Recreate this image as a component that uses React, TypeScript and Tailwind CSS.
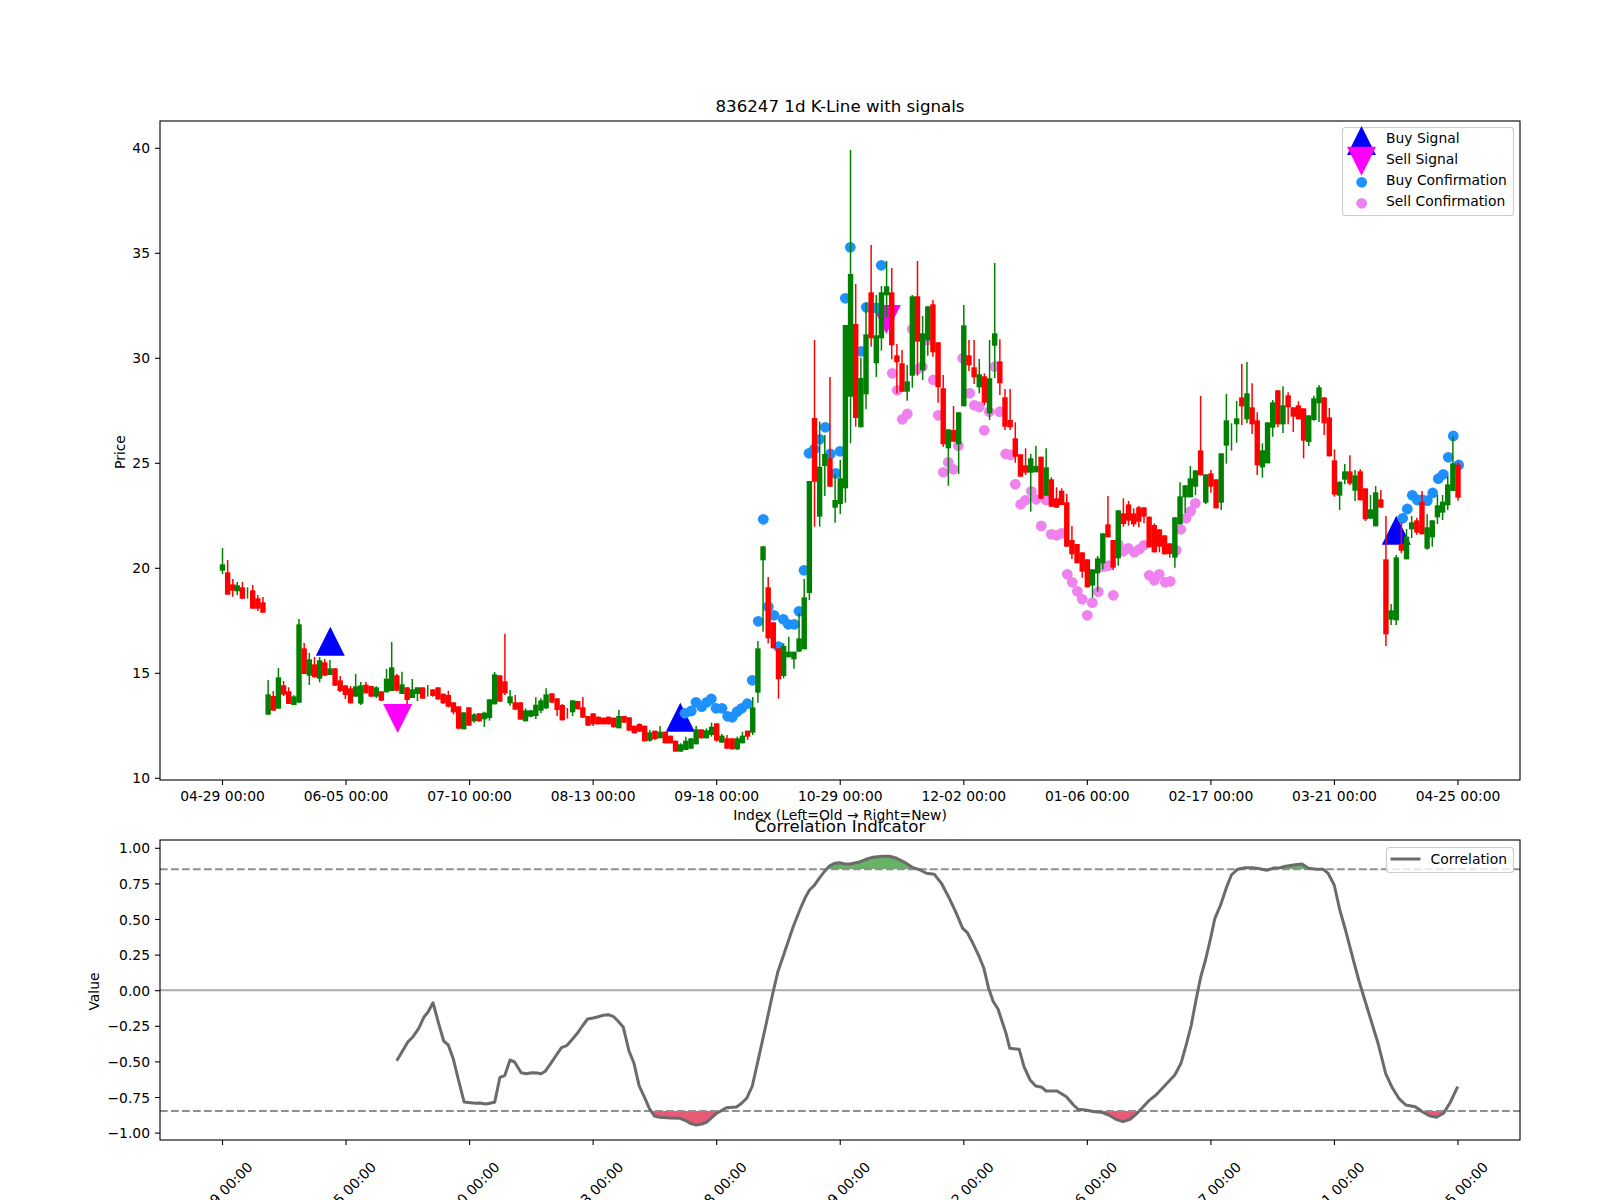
import React from "react";

type Row = ["g" | "r", number, number, number, number];

// wick top, wick bottom, body top, body bottom. y values measured from the reference crop
const fromCrop = (y0: number, rows: Row[]): Row[] =>
  rows.map(([c, a, b, d, e]) => [c, y0 + a / 3, y0 + b / 3, y0 + d / 3, y0 + e / 3]);

const candles: Row[] = [
  ...fromCrop(480, [
    ["g", 204, 282, 253, 272], ["r", 240, 344, 277, 344], ["r", 297, 350, 313, 332], ["g", 306, 345, 316, 334],
    ["r", 306, 357, 322, 356], ["g", 322, 356, 0, 0], ["r", 315, 386, 331, 386], ["r", 345, 393, 355, 386],
    ["r", 351, 398, 367, 398], ["g", 600, 704, 643, 704], ["r", 633, 692, 648, 692], ["g", 564, 686, 592, 686],
    ["r", 603, 648, 616, 644], ["r", 622, 672, 634, 672], ["g", 646, 675, 649, 675], ["g", 417, 668, 433, 668],
    ["r", 489, 582, 505, 582], ["g", 519, 615, 538, 587], ["r", 531, 592, 553, 592], ["g", 531, 607, 541, 596],
    ["r", 537, 588, 547, 587], ["g", 540, 585, 565, 585], ["r", 565, 617, 565, 617], ["r", 588, 636, 601, 633],
    ["r", 616, 657, 616, 645], ["r", 618, 670, 625, 670], ["g", 582, 650, 619, 650], ["g", 606, 675, 616, 671],
    ["r", 606, 640, 614, 640], ["r", 617, 650, 618, 650], ["g", 619, 654, 622, 650], ["r", 634, 662, 634, 662],
    ["g", 567, 637, 596, 637], ["g", 486, 633, 562, 633], ["r", 582, 634, 586, 632], ["g", 575, 642, 613, 642],
    ["r", 622, 672, 622, 660], ["g", 597, 654, 628, 654], ["g", 622, 663, 622, 642], ["r", 622, 656, 622, 656],
    ["g", 615, 650, 0, 0], ["r", 628, 650, 628, 648], ["r", 622, 660, 622, 658], ["r", 641, 672, 641, 670],
    ["r", 632, 682, 645, 680], ["r", 667, 703, 667, 697], ["r", 679, 748, 679, 746], ["g", 697, 748, 697, 748],
    ["r", 682, 737, 682, 737], ["g", 700, 728, 703, 724], ["r", 700, 725, 700, 724], ["g", 695, 741, 698, 718],
    ["g", 658, 722, 658, 714], ["g", 576, 673, 583, 673], ["r", 586, 665, 586, 665], ["r", 461, 645, 604, 640],
    ["g", 630, 677, 649, 670], ["r", 645, 689, 667, 689], ["r", 667, 719, 667, 719], ["g", 685, 724, 691, 724],
    ["g", 690, 712, 691, 710], ["g", 652, 717, 674, 708], ["g", 655, 700, 661, 692], ["g", 625, 687, 643, 685],
  ]),
  ...fromCrop(480, [
    ["r", 640, 668, 640, 668], ["r", 655, 708, 655, 690], ["r", 672, 721, 675, 721], ["r", 684, 716, 0, 0],
    ["g", 661, 708, 661, 697], ["r", 663, 688, 663, 688], ["r", 651, 713, 682, 713], ["r", 708, 737, 708, 737],
    ["r", 700, 738, 700, 733], ["r", 710, 733, 710, 733], ["r", 713, 733, 713, 733], ["r", 710, 733, 710, 733],
    ["r", 713, 742, 713, 742], ["g", 689, 745, 708, 745], ["r", 708, 728, 708, 728], ["r", 712, 752, 712, 752],
    ["r", 737, 760, 737, 760], ["r", 730, 755, 732, 755], ["r", 737, 784, 737, 784], ["g", 750, 785, 757, 782],
    ["r", 752, 780, 752, 777], ["g", 738, 775, 755, 775], ["r", 755, 790, 755, 790], ["r", 767, 790, 767, 790],
    ["r", 782, 815, 782, 815], ["g", 790, 815, 793, 815], ["g", 770, 810, 782, 810], ["g", 775, 806, 775, 806],
    ["g", 738, 793, 748, 793], ["r", 748, 775, 748, 775], ["g", 745, 775, 751, 775], ["g", 728, 770, 740, 765],
    ["r", 730, 785, 730, 782], ["g", 762, 788, 767, 788], ["r", 765, 806, 775, 806], ["r", 775, 808, 775, 808],
    ["g", 770, 810, 775, 808], ["g", 755, 790, 767, 790], ["r", 752, 780, 752, 770], ["g", 651, 765, 682, 758],
    ["g", 483, 668, 505, 638], ["g", 199, 455, 199, 241], ["r", 291, 490, 322, 475], ["r", 427, 505, 427, 505],
    ["r", 505, 656, 505, 598], ["g", 490, 595, 498, 588], ["g", 470, 532, 515, 532], ["g", 515, 566, 515, 538],
    ["g", 400, 515, 475, 515], ["g", 297, 508, 352, 508],
  ]),
  ["g", 481, 600, 481, 593], ["r", 340, 526.7, 418, 481.7], ["g", 421.7, 526.7, 466.7, 516.7], ["g", 435, 496, 454, 466],
  ["r", 377, 486.7, 458.3, 486.7], ["g", 474, 522.7, 500, 507.7], ["g", 460, 514, 478.3, 504], ["g", 325, 502.7, 325, 488.3],
  ["g", 150, 443.3, 274, 396.7], ["r", 284, 426.7, 324, 418], ["g", 357.7, 427.3, 378, 427.3], ["g", 302.7, 409.3, 334.3, 394.3],
  ["r", 245, 346.7, 292.3, 338.3], ["g", 295, 377, 335.3, 363.3], ["g", 286, 350.7, 292.3, 338.3], ["g", 261, 317.3, 286.3, 295.3],
  ["r", 268, 359.3, 292.3, 345.3], ["r", 344, 393.3, 355.3, 362.3], ["r", 350, 392, 363.3, 391.7], ["g", 365, 400.7, 381.3, 391.7],
  ["g", 295, 387.7, 296.3, 375.7], ["r", 261, 375.7, 296.3, 341.7], ["g", 316, 380, 333.3, 370.3], ["g", 306.3, 355.7, 306.3, 340.3],
  ["r", 300, 356.7, 304.3, 352.3], ["r", 342.3, 402.7, 342.3, 387.3], ["r", 375, 446.7, 388.3, 444.3], ["g", 429.3, 485.7, 429.3, 448.3],
  ["r", 406, 441.7, 430, 441.7], ["g", 412.3, 474, 412.3, 444.3], ["g", 305, 406.3, 325.3, 406.3], ["r", 340, 371, 355.3, 365.3],
  ["r", 340, 384, 367.3, 377.3], ["g", 359, 393.3, 374.3, 387.3], ["r", 373.3, 405, 376.3, 402.7], ["g", 340, 420, 378.3, 413.3],
  ["g", 263, 378, 333.3, 345.7], ["r", 339.3, 395, 361.3, 383.3], ["r", 389, 430, 397.3, 426.7], ["r", 389, 430, 420, 427.3],
  ["r", 422.3, 462.7, 438.3, 456.7], ["r", 454.3, 476.7, 454.3, 476.7], ["r", 448.3, 475, 465.3, 472.7], ["g", 454, 511.7, 458.3, 472.7],
  ["g", 446, 472.3, 466, 472.3], ["r", 456.7, 498.7, 456.7, 498.7], ["g", 448.3, 495.7, 467.3, 495.7], ["r", 477.3, 506.7, 479.3, 506.7],
  ["r", 487.3, 507.7, 498.3, 507.7], ["r", 488.3, 505, 490.7, 505], ["r", 494, 546.7, 502.3, 546.7], ["r", 526, 559, 540, 554.3],
  ["r", 544, 563.3, 544, 563.3],
  ...fromCrop(340, [
    ["r", 637, 713, 637, 695], ["r", 658, 742, 658, 742], ["g", 688, 773, 688, 737], ["g", 648, 755, 655, 700],
    ["g", 580, 688, 580, 670], ["r", 468, 592, 553, 592], ["r", 600, 690, 600, 683], ["g", 511, 677, 511, 655],
    ["r", 475, 560, 520, 552], ["r", 483, 557, 493, 542], ["r", 505, 560, 520, 553], ["r", 498, 562, 502, 545],
    ["r", 502, 550, 502, 530], ["r", 530, 622, 530, 622], ["r", 550, 637, 555, 637], ["r", 568, 637, 568, 620],
    ["r", 586, 643, 586, 643], ["r", 610, 653, 610, 642], ["g", 532, 683, 532, 653], ["g", 427, 553, 469, 553],
    ["g", 436, 520, 436, 472], ["g", 378, 472, 415, 472], ["g", 391, 465, 391, 440], ["r", 168, 406, 331, 406],
    ["g", 403, 492, 403, 488], ["r", 390, 458, 400, 440], ["r", 418, 505, 418, 505], ["g", 340, 510, 340, 488],
    ["g", 162, 371, 241, 317], ["g", 250, 332, 0, 0], ["g", 183, 308, 235, 253], ["r", 72, 255, 172, 199],
    ["g", 66, 250, 160, 238], ["r", 130, 282, 202, 253], ["r", 217, 405, 241, 376], ["g", 310, 413, 331, 382],
    ["g", 247, 370, 247, 370], ["g", 180, 290, 187, 263], ["r", 151, 262, 151, 253], ["g", 139, 279, 196, 253],
    ["r", 157, 253, 166, 202], ["r", 202, 276, 202, 230], ["r", 184, 238, 196, 238], ["r", 205, 355, 205, 302],
    ["g", 226, 318, 226, 306],
  ]),
  ...fromCrop(380, [
    ["g", 47, 122, 55, 120], ["g", 15, 126, 22, 70], ["r", 52, 165, 52, 130], ["r", 84, 229, 112, 229],
    ["r", 208, 350, 241, 344], ["g", 305, 390, 305, 347], ["g", 252, 313, 274, 299], ["r", 226, 316, 274, 311],
    ["g", 270, 363, 286, 332], ["r", 268, 361, 274, 361], ["r", 325, 423, 325, 418], ["g", 345, 416, 388, 416],
    ["g", 318, 439, 337, 439], ["r", 330, 383, 358, 383], ["r", 408, 798, 538, 763], ["g", 672, 735, 691, 719],
    ["g", 525, 735, 532, 721], ["r", 427, 520, 491, 512], ["g", 447, 538, 470, 538], ["g", 408, 474, 427, 448],
    ["r", 413, 464, 421, 458], ["r", 333, 463, 366, 463], ["g", 403, 509, 442, 506], ["g", 421, 500, 421, 472],
    ["g", 345, 432, 376, 412], ["g", 345, 420, 365, 398], ["g", 288, 390, 313, 376], ["g", 170, 333, 250, 333],
    ["r", 245, 362, 254, 353],
  ]),
];

const buyDots = [
  [763.3, 519.3], [752.3, 680.3], [758.3, 621.3], [768.3, 606.7], [774, 615.3], [778.7, 646.7], [783.3, 619.3],
  [788.3, 624.3], [794.3, 624.3], [799, 611.3], [804, 570.3], [685, 713.3], [691.3, 711], [696, 702.3],
  [701.7, 706.7], [706.7, 702.3], [711.3, 699], [716, 708.3], [722, 708.3], [727.7, 716.3], [732.3, 717.3],
  [737, 711.7], [741.7, 708.3], [747.3, 703.7], [809, 453.3], [814.3, 449.3], [819.7, 439.3], [825.3, 427.3],
  [830.3, 454], [835.7, 473.3], [840, 451.3], [850.3, 247.3], [845.3, 298.3], [861.3, 351.3], [866.3, 307.3],
  [881.3, 265.3], [876.3, 308], [1402.7, 518.3], [1407.3, 509], [1412.3, 495.3], [1417.3, 500], [1422.3, 500],
  [1427.3, 500.7], [1432.7, 493], [1438.3, 478.7], [1443.3, 474.3], [1448.3, 457.3], [1453.3, 436], [1458.7, 465],
];

const sellDots = [
  [892.3, 373.3], [897.3, 390.3], [902.3, 419.3], [907.3, 414], [912.3, 329.3], [917.3, 369.3], [922.3, 366.7],
  [927.3, 340], [933.3, 380], [938.3, 415.3], [943.3, 472.3], [948.3, 462.3], [953.3, 469.3], [958.3, 445.7],
  [962.7, 358.3], [969.7, 393.3], [974.3, 405.3], [979.3, 407], [984.3, 430.3], [989.3, 411.7], [994.7, 366.7],
  [999.7, 411.7], [1005.7, 454], [1010.7, 455], [1015.3, 484.3], [1020.7, 504.3], [1025.3, 500.3], [1031.3, 491.3],
  [1036.3, 499.3], [1041.3, 526], [1046, 500], [1051.3, 534.3], [1056.7, 535.3], [1061.7, 533.3], [1067.3, 574.3],
  [1072.3, 582.3], [1077.3, 591.3], [1082.3, 599.3], [1087.3, 615.3], [1092.3, 602.7], [1098.3, 591.7],
  [1103.3, 566.7], [1108.3, 565.7], [1113.3, 595.3], [1118.3, 544.3], [1123.3, 551.3], [1128.3, 548.3],
  [1134.3, 552.3], [1139.3, 549.3], [1144, 545.3], [1149.3, 575.3], [1154.3, 580.3], [1159.3, 574.3],
  [1165.3, 582.3], [1170.3, 581.3], [1176.3, 550.3], [1180.7, 529.3], [1186, 518.3], [1190.7, 511.3], [1195.3, 503.3],
];

const corrLeft = [
  660, 842, 682, 785, 692, 770, 703, 745, 713, 712, 721, 697, 731, 668, 742, 730, 752, 783, 761, 795, 771, 838, 781, 900,
  792, 966, 805, 968, 815, 970, 822, 969, 835, 972, 852, 967, 862, 893, 872, 886, 882, 840, 891, 846, 904, 878, 914, 881,
  925, 878, 935, 879, 943, 881, 951, 874, 962, 850, 973, 825, 983, 803, 993, 797, 1003, 780, 1014, 760, 1024, 738, 1034, 717,
  1045, 714, 1055, 710, 1065, 706, 1075, 704, 1085, 710, 1095, 725, 1104, 742, 1115, 812, 1125, 850, 1135, 917, 1145, 950,
  1155, 985, 1165, 1008, 1175, 1012, 1195, 1014, 1215, 1015, 1225, 1021, 1235, 1030, 1247, 1035, 1258, 1032, 1268, 1026,
  1278, 1012, 1287, 1000, 1296, 992, 1306, 983, 1326, 981, 1336, 970, 1346, 955, 1357, 918, 1367, 850, 1377, 780, 1387, 710,
  1397, 640, 1407, 575, 1417, 530, 1427, 485, 1437, 440, 1450, 390, 1460, 355, 1469, 330, 1478, 317, 1488, 295, 1498, 275,
  1508, 258, 1518, 250, 1528, 248, 1538, 252, 1548, 252,
];
const corrRight = [
  124, 247, 140, 238, 155, 232, 175, 229, 190, 229, 205, 235, 222, 247, 238, 262, 255, 270, 268, 280, 285, 283, 300, 310,
  315, 350, 330, 395, 345, 445, 355, 458, 365, 485, 380, 530, 390, 565, 400, 625, 410, 665, 420, 687, 430, 730, 437, 760,
  445, 805, 465, 808, 475, 860, 488, 900, 500, 918, 513, 922, 522, 933, 545, 933, 565, 950, 580, 975, 590, 988, 605, 990,
  625, 995, 640, 997, 655, 1005, 670, 1018, 685, 1025, 700, 1018, 715, 1000, 725, 985, 740, 962, 755, 945, 775, 915, 795, 885,
  808, 850, 820, 790, 830, 735, 840, 660, 850, 590, 860, 540, 870, 480, 880, 415, 892, 375, 905, 320, 915, 285, 928, 268,
  945, 263, 960, 263, 975, 266, 990, 271, 1005, 264, 1018, 263, 1030, 259, 1050, 254, 1065, 252, 1078, 265, 1095, 268, 1110, 268,
  1120, 280, 1133, 315, 1145, 390, 1157, 450, 1170, 520, 1185, 600, 1200, 670, 1213, 730, 1225, 785, 1235, 840, 1242, 880,
  1255, 920, 1270, 955, 1285, 975, 1305, 980, 1320, 995, 1335, 1007, 1350, 1012, 1365, 1000, 1380, 965, 1395, 920,
];

const corrPoints: [number, number][] = [];
for (let i = 0; i < corrLeft.length; i += 2) corrPoints.push([60 + corrLeft[i] / 1.96, 780 + corrLeft[i + 1] / 3]);
for (let i = 0; i < corrRight.length; i += 2) corrPoints.push([800 + corrRight[i] / 2.121, 780 + corrRight[i + 1] / 3]);

const corrLine = corrPoints.map(([x, y]) => `${x.toFixed(1)},${y.toFixed(1)}`).join(" ");
const firstX = corrPoints[0][0].toFixed(1);
const lastX = corrPoints[corrPoints.length - 1][0].toFixed(1);
const UP_Y = 869.3;
const DOWN_Y = 1111;

const xTicks = ["04-29", "06-05", "07-10", "08-13", "09-18", "10-29", "12-02", "01-06", "02-17", "03-21", "04-25"];
const tickX = (k: number) => 222.5 + 123.55 * k;
const priceTicks = [10, 15, 20, 25, 30, 35, 40];
const corrTicks = ["1.00", "0.75", "0.50", "0.25", "0.00", "−0.25", "−0.50", "−0.75", "−1.00"];

const upTriangle = (x: number, baseY: number) => `${x},${baseY - 29} ${x - 14.5},${baseY} ${x + 14.5},${baseY}`;
const downTriangle = (x: number, topY: number) => `${x - 14.5},${topY} ${x + 14.5},${topY} ${x},${topY + 29}`;

export default function App() {
  return (
    <div className="w-[1600px] h-[1200px] bg-white overflow-hidden">
      <svg width="1600" height="1200" viewBox="0 0 1600 1200" className="block font-['DejaVu_Sans',sans-serif] text-[13.89px]">
        <defs>
          <clipPath id="aboveBand">
            <rect x="160" y="841" width="1360" height={UP_Y - 841} />
          </clipPath>
          <clipPath id="belowBand">
            <rect x="160" y={DOWN_Y} width="1360" height={1140 - DOWN_Y} />
          </clipPath>
        </defs>

        {/* price panel */}
        <text x="840" y="112" textAnchor="middle" className="text-[16.67px]">836247 1d K-Line with signals</text>

        <polygon points={upTriangle(330.3, 655.7)} fill="#0000ff" />
        <polygon points={upTriangle(680.3, 731.7)} fill="#0000ff" />
        <polygon points={upTriangle(1396.3, 544.7)} fill="#0000ff" />
        <polygon points={downTriangle(397.7, 704)} fill="#ff00ff" />
        <polygon points={downTriangle(886.3, 305)} fill="#ff00ff" />

        {buyDots.map(([x, y], i) => <circle key={i} cx={x} cy={y} r="5.4" fill="#1e90ff" />)}
        {sellDots.map(([x, y], i) => <circle key={i} cx={x} cy={y} r="5.4" fill="#ee82ee" />)}

        {candles.map(([c, wt, wb, bt, bb], i) => {
          // the first stretch sits a little left of the even spacing in the reference
          const x = 222.5 + 5.148 * i - (i > 2 && i < 64 ? 0.7 : 0);
          const color = c === "g" ? "#008000" : "#ff0000";
          return (
            <g key={i}>
              <line x1={x} x2={x} y1={wt} y2={wb} stroke={color} strokeWidth="1.5" />
              {bb > bt && <rect x={x - 2.7} y={bt} width="5.4" height={bb - bt} fill={color} />}
            </g>
          );
        })}

        <rect x="160" y="121" width="1360" height="659" fill="none" stroke="#000" strokeWidth="1.1" />

        {priceTicks.map((p) => {
          const y = 778.3 - 21 * (p - 10);
          return (
            <g key={p}>
              <line x1="155" x2="160" y1={y} y2={y} stroke="#000" strokeWidth="1.1" />
              <text x="150" y={y + 5} textAnchor="end">{p}</text>
            </g>
          );
        })}
        {xTicks.map((t, k) => (
          <g key={t + k}>
            <line x1={tickX(k)} x2={tickX(k)} y1="780" y2="785" stroke="#000" strokeWidth="1.1" />
            <text x={tickX(k)} y="801" textAnchor="middle">{t} 00:00</text>
          </g>
        ))}
        <text x="840" y="820" textAnchor="middle">Index (Left=Old → Right=New)</text>
        <text transform="rotate(-90 119.5 452)" x="119.5" y="457" textAnchor="middle">Price</text>

        {/* price legend */}
        <rect x="1342.5" y="127.5" width="171" height="88" rx="3" fill="#fff" fillOpacity="0.8" stroke="#ccc" strokeWidth="1.1" />
        <polygon points={upTriangle(1361.5, 155)} fill="#0000ff" />
        <polygon points={downTriangle(1361.5, 146.7)} fill="#ff00ff" />
        <circle cx="1361.7" cy="182.3" r="5.4" fill="#1e90ff" />
        <circle cx="1361.7" cy="203.3" r="5.4" fill="#ee82ee" />
        <text x="1386" y="142.5">Buy Signal</text>
        <text x="1386" y="163.5">Sell Signal</text>
        <text x="1386" y="184.5">Buy Confirmation</text>
        <text x="1386" y="206">Sell Confirmation</text>

        {/* correlation panel */}
        <text x="840" y="832" textAnchor="middle" className="text-[16.67px]">Correlation Indicator</text>

        <polygon clipPath="url(#aboveBand)" points={`${firstX},${UP_Y} ${corrLine} ${lastX},${UP_Y}`} fill="#008000" fillOpacity="0.6" />
        <polygon clipPath="url(#belowBand)" points={`${firstX},${DOWN_Y} ${corrLine} ${lastX},${DOWN_Y}`} fill="#dc143c" fillOpacity="0.7" />

        <line x1="160" x2="1520" y1="990.3" y2="990.3" stroke="#aaaaaa" strokeWidth="2" />
        <line x1="160" x2="1520" y1={UP_Y} y2={UP_Y} stroke="#8f8f8f" strokeWidth="2" strokeDasharray="7.7 3.3" />
        <line x1="160" x2="1520" y1={DOWN_Y} y2={DOWN_Y} stroke="#8f8f8f" strokeWidth="2" strokeDasharray="7.7 3.3" />
        <polyline points={corrLine} fill="none" stroke="#6b6b6b" strokeWidth="3" strokeLinejoin="round" />

        <rect x="160" y="840" width="1360" height="300" fill="none" stroke="#000" strokeWidth="1.1" />

        {corrTicks.map((t, k) => {
          const y = 848.3 + 35.6 * k;
          return (
            <g key={t}>
              <line x1="155" x2="160" y1={y} y2={y} stroke="#000" strokeWidth="1.1" />
              <text x="150" y={y + 5} textAnchor="end">{t}</text>
            </g>
          );
        })}
        {xTicks.map((t, k) => (
          <g key={t + k}>
            <line x1={tickX(k)} x2={tickX(k)} y1="1140" y2="1145" stroke="#000" strokeWidth="1.1" />
            <text transform={`rotate(-45 ${tickX(k) - 2.5} 1194.5)`} x={tickX(k) - 2.5} y="1199.5" textAnchor="middle">{t} 00:00</text>
          </g>
        ))}
        <text transform="rotate(-90 94 991.5)" x="94" y="996.5" textAnchor="middle">Value</text>

        {/* correlation legend */}
        <rect x="1386.5" y="847.5" width="127" height="25" rx="3" fill="#fff" fillOpacity="0.8" stroke="#ccc" strokeWidth="1.1" />
        <line x1="1390.5" x2="1420.5" y1="859" y2="859" stroke="#6b6b6b" strokeWidth="3" />
        <text x="1430.5" y="864">Correlation</text>
      </svg>
    </div>
  );
}
